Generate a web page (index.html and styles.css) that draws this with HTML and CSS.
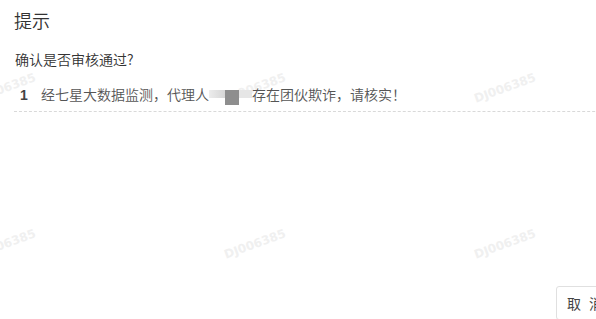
FILE: index.html
```html
<!DOCTYPE html>
<html lang="zh-CN">
<head>
<meta charset="utf-8">
<title>提示</title>
<link rel="stylesheet" href="styles.css">
</head>
<body>
<div class="watermarks" aria-hidden="true">
  <span class="wm">DJ006385</span><span class="wm">DJ006385</span><span class="wm">DJ006385</span>
  <span class="wm">DJ006385</span><span class="wm">DJ006385</span><span class="wm">DJ006385</span>
</div>
<div class="dialog">
  <h1 class="title">提示</h1>
  <p class="message">确认是否审核通过?</p>
  <ul class="list">
    <li class="item">
      <span class="num">1</span>
      <span class="text">经七星大数据监测，代理人<span class="mosaic"><i class="m1"></i><i class="m2"></i><i class="m3"></i></span>存在团伙欺诈，请核实！</span>
    </li>
  </ul>
  <div class="footer">
    <button class="btn">取消</button>
  </div>
</div>
</body>
</html>
```
FILE: styles.css
```css
html { background: #fff; }
body {
  margin: 0;
  font-family: "Noto Sans CJK SC", "Noto Sans", sans-serif;
  font-weight: 350;
  color: #333;
  position: relative;
  width: 596px;
  height: 319px;
  overflow: hidden;
}
.watermarks {
  position: absolute;
  left: -120px;
  top: 10px;
  display: grid;
  grid-template-columns: repeat(3, 250px);
  grid-auto-rows: 156px;
  z-index: -1;
}
.wm {
  display: flex;
  align-items: center;
  justify-content: center;
  font-family: "DejaVu Sans", sans-serif;
  font-weight: bold;
  font-size: 12px;
  color: #f0f0f0;
  transform: rotate(-20deg);
}
.dialog {
  width: 640px;
  padding: 7px 0 0 14px;
  box-sizing: border-box;
}
.title {
  margin: 0;
  font-size: 18px;
  font-weight: 350;
  line-height: 26px;
  color: #333;
}
.message {
  margin: 16px 0 0 1px;
  font-size: 14px;
  line-height: 20px;
  color: #333;
}
.list {
  list-style: none;
  margin: 10px 0 0;
  padding: 0;
}
.item {
  display: flex;
  align-items: center;
  height: 32px;
  border-bottom: 1px dashed #d9d9d9;
  font-size: 14px;
  color: #555;
}
.num {
  width: 27px;
  padding-left: 6px;
  box-sizing: border-box;
  font-weight: bold;
  color: #444;
  font-family: "Liberation Sans", sans-serif;
}
.text { white-space: nowrap; }
.mosaic {
  display: inline-flex;
  align-items: flex-start;
  vertical-align: 2px;
  height: 16px;
  width: 43px;
  position: relative;
}
.mosaic::after {
  content: "";
  position: absolute;
  left: -1px;
  right: 16px;
  bottom: -14px;
  height: 4px;
  background: #fff;
}
.mosaic i { display: block; }
.m1 { width: 16px; height: 8px; margin-top: 0; background: linear-gradient(90deg, #ececec, #d6d6d6); }
.m2 { width: 14px; height: 15px; background: #8e8e8e; }
.m3 { width: 13px; height: 8px; margin-top: 0; background: #e6e6e6; }
.footer {
  display: flex;
  justify-content: flex-end;
  padding: 174px 0 0;
}
.btn {
  width: 84px;
  height: 34px;
  border: 1px solid #e0e0e0;
  border-radius: 3px;
  background: #fff;
  font-family: inherit;
  font-weight: 400;
  font-size: 14px;
  letter-spacing: 8px;
  color: #444;
  text-align: left;
  padding: 0 0 0 10px;
}
```
